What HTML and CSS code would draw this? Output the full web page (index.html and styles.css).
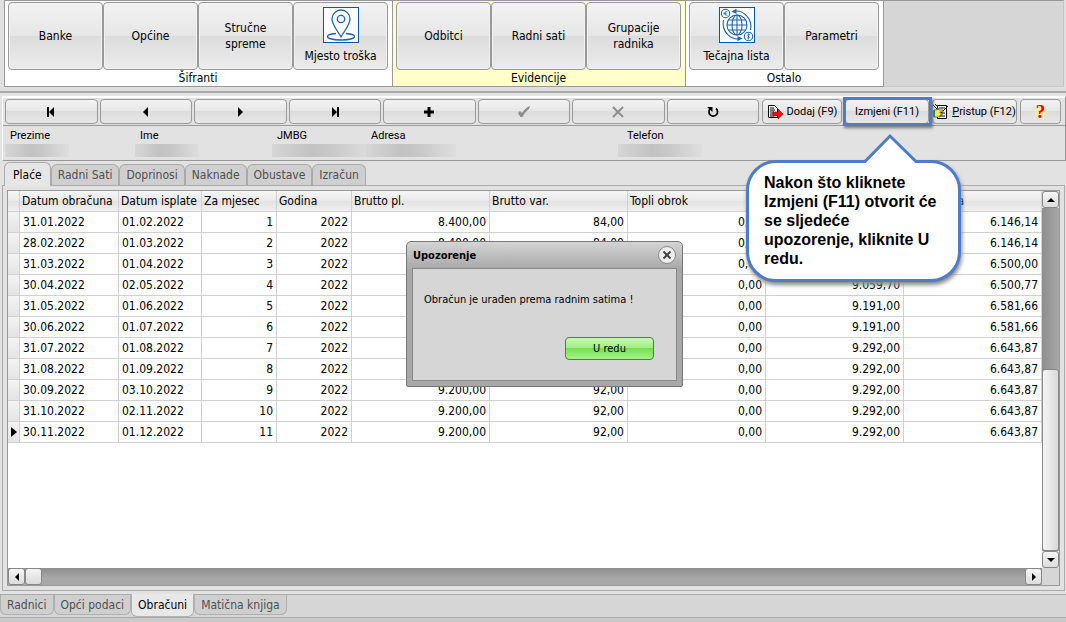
FILE: index.html
```html
<!DOCTYPE html>
<html lang="hr">
<head>
  <meta charset="UTF-8">
  <meta name="viewport" content="width=device-width, initial-scale=1.0">
  <title>Obračun plaća</title>
  <link rel="stylesheet" href="styles.css">
</head>
<body>
  <div class="ribbon">
    <section class="group">
      <div class="group-buttons">
        <button class="big">Banke</button>
        <button class="big">Općine</button>
        <button class="big">Stručne<br>spreme</button>
        <button class="big with-icon">
          <svg class="big-icon" viewBox="0 0 36 36">
            <rect x=".5" y=".5" width="35" height="35" fill="#fff" stroke="#0a57a8"/>
            <g fill="none" stroke="#1b62ae" stroke-width="1.3">
              <path d="M18 30C15 24 9 18 9 12a9 9 0 0 1 18 0c0 6-6 12-9 18z"/>
              <circle cx="18" cy="12" r="3.7"/>
              <path d="M13 26.500C7 27 4.500 28.500 4.500 29.500c0 2 6 3.500 13.500 3.500s13.500-1.500 13.500-3.500c0-1-2.500-2.500-8.500-3"/>
            </g>
          </svg>
          <span>Mjesto troška</span>
        </button>
      </div>
      <div class="group-title">Šifranti</div>
    </section>
    <section class="group yellow">
      <div class="group-buttons">
        <button class="big">Odbitci</button>
        <button class="big">Radni sati</button>
        <button class="big">Grupacije<br>radnika</button>
      </div>
      <div class="group-title">Evidencije</div>
    </section>
    <section class="group">
      <div class="group-buttons">
        <button class="big with-icon">
          <svg class="big-icon" viewBox="0 0 36 36">
            <rect x=".5" y=".5" width="35" height="35" fill="#fff" stroke="#0a57a8"/>
            <g fill="none" stroke="#1b62ae" stroke-width="1.1">
              <circle cx="18" cy="18" r="10"/>
              <ellipse cx="18" cy="18" rx="5" ry="10"/>
              <path d="M18 8v20M8 18h20M9.500 13h17M9.500 23h17"/>
              <circle cx="6.500" cy="6.500" r="4.200"/>
              <path d="M8.500 4.800c-3-1.500-4.500 3.500 0 3.500M4.500 6h3M4.500 7h3" stroke-width=".8"/>
              <circle cx="29.500" cy="29.500" r="4.200"/>
              <path d="M31 28c-1.500-1.300-3.500 0-2 1.300 2.500 1 1.500 3-1 1.500M29.500 26.500v6" stroke-width=".8"/>
              <path d="M14 4.500C24 2 34 12 31.500 23M22 31.500C12 34 2 24 4.500 13"/>
            </g>
            <path d="M12.500 4.800l5-3v5zM23.500 31.200l-5 3v-5z" fill="#1b62ae"/>
          </svg>
          <span>Tečajna lista</span>
        </button>
        <button class="big">Parametri</button>
      </div>
      <div class="group-title">Ostalo</div>
    </section>
    <div class="ribbon-rest"></div>
  </div>

  <main class="record">
    <div class="toolbar">
      <div class="navigator">
        <button class="btn" aria-label="Prvi"><svg viewBox="0 0 12 12"><path d="M2 1h2v10H2zM9 1v10L4 6z"/></svg></button>
        <button class="btn" aria-label="Prethodni"><svg viewBox="0 0 12 12"><path d="M8 1v10L3 6z"/></svg></button>
        <button class="btn" aria-label="Sljedeći"><svg viewBox="0 0 12 12"><path d="M4 1v10l5-5z"/></svg></button>
        <button class="btn" aria-label="Zadnji"><svg viewBox="0 0 12 12"><path d="M8 1h2v10H8zM3 1v10l5-5z"/></svg></button>
        <button class="btn" aria-label="Novi"><svg viewBox="0 0 12 12"><path d="M4.500 1h3v3.500H11v3H7.500V11h-3V7.500H1v-3h3.500z"/></svg></button>
        <button class="btn" aria-label="Spremi" disabled><svg viewBox="0 0 12 12"><path d="M0 7l2-2 2 2C6 4 9 1 12 0L11 3C8 5 6 8 4.500 11h-2z"/></svg></button>
        <button class="btn" aria-label="Odustani" disabled><svg viewBox="0 0 12 12"><path d="M1 1l10 10M11 1L1 11" fill="none" stroke="#8c8c8c" stroke-width="1.8"/></svg></button>
        <button class="btn" aria-label="Osvježi"><svg viewBox="0 0 12 12"><path d="M3.500 2.500a4.300 4.300 0 1 0 5.500 0" fill="none" stroke="#000" stroke-width="1.700"/><path d="M0 1h5.500v5z"/></svg></button>
      </div>
      <div class="actions">
        <button class="btn add">
          <svg class="act-icon" viewBox="0 0 16 16"><path d="M1.500 1.500h6l3 3v9h-9z" fill="#fff" stroke="#000"/><path d="M3 4h4M3 6h5M3 8h4M3 10h4M3 12h4" stroke="#000"/><path d="M6 8h5V5l5 5-5 5v-3H6z" fill="#e11" stroke="#900" stroke-width=".6"/></svg>
          Dodaj (F9)
        </button>
        <div class="edit">
          <button class="btn">Izmjeni (F11)</button>
          <div class="callout">
            <svg class="callout-tail" viewBox="0 0 60 30"><path d="M2 28.500h3L30 3l26 25.500h3V30H2z" fill="#fff"/><path d="M2 28.500h3L30 3l26 25.500h3" fill="none" stroke="#4d7cc9" stroke-width="3"/></svg>
            Nakon što kliknete Izmjeni (F11) otvorit će se sljedeće upozorenje, kliknite U redu.
          </div>
        </div>
        <button class="btn access">
          <svg class="act-icon" viewBox="0 0 16 16"><path d="M4.500 1.500h9v13h-9z" fill="#fff" stroke="#000"/><path d="M6 4h6M6 12h6M8 9h4M0 1l4 4M2 0l3 3M15 2L8 9" stroke="#000"/><path d="M1 6h3l1-2 1 2h4v2H7v1h2v2H7v2H1z" fill="#ffef3a" stroke="#333" stroke-width=".7"/><path d="M0 6h2v7H0z" fill="#0a8b8b"/></svg>
          <span><u>P</u>ristup (F12)</span>
        </button>
        <button class="btn help" aria-label="Pomoć"><span>?</span></button>
      </div>
    </div>

    <dl class="person">
      <div><dt>Prezime</dt><dd class="smudge"></dd></div>
      <div><dt>Ime</dt><dd class="smudge"></dd></div>
      <div><dt>JMBG</dt><dd class="smudge wide"></dd></div>
      <div><dt>Adresa</dt><dd class="smudge mid"></dd></div>
      <div><dt>Telefon</dt><dd class="smudge phone"></dd></div>
    </dl>
  </main>

  <nav class="tabs">
    <button class="tab active">Plaće</button>
    <button class="tab">Radni Sati</button>
    <button class="tab">Doprinosi</button>
    <button class="tab">Naknade</button>
    <button class="tab">Obustave</button>
    <button class="tab">Izračun</button>
  </nav>

  <div class="sheet">
    <div class="grid">
      <div class="grid-view">
        <table>
          <colgroup>
            <col class="c-mark"><col class="c-calc"><col class="c-paid"><col class="c-num"><col class="c-num">
            <col class="c-sum"><col class="c-sum"><col class="c-sum"><col class="c-sum"><col>
          </colgroup>
          <thead>
            <tr><th></th><th>Datum obračuna</th><th>Datum isplate</th><th>Za mjesec</th><th>Godina</th><th>Brutto pl.</th><th>Brutto var.</th><th>Topli obrok</th><th></th><th>Neto plaća</th></tr>
          </thead>
          <tbody>
            <tr><td></td><td>31.01.2022</td><td>01.02.2022</td><td>1</td><td>2022</td><td>8.400,00</td><td>84,00</td><td>0,00</td><td></td><td>6.146,14</td></tr>
            <tr><td></td><td>28.02.2022</td><td>01.03.2022</td><td>2</td><td>2022</td><td>8.400,00</td><td>84,00</td><td>0,00</td><td></td><td>6.146,14</td></tr>
            <tr><td></td><td>31.03.2022</td><td>01.04.2022</td><td>3</td><td>2022</td><td></td><td></td><td>0,00</td><td></td><td>6.500,00</td></tr>
            <tr><td></td><td>30.04.2022</td><td>02.05.2022</td><td>4</td><td>2022</td><td></td><td></td><td>0,00</td><td>9.059,70</td><td>6.500,77</td></tr>
            <tr><td></td><td>31.05.2022</td><td>01.06.2022</td><td>5</td><td>2022</td><td></td><td></td><td>0,00</td><td>9.191,00</td><td>6.581,66</td></tr>
            <tr><td></td><td>30.06.2022</td><td>01.07.2022</td><td>6</td><td>2022</td><td></td><td></td><td>0,00</td><td>9.191,00</td><td>6.581,66</td></tr>
            <tr><td></td><td>31.07.2022</td><td>01.08.2022</td><td>7</td><td>2022</td><td></td><td></td><td>0,00</td><td>9.292,00</td><td>6.643,87</td></tr>
            <tr><td></td><td>31.08.2022</td><td>01.09.2022</td><td>8</td><td>2022</td><td></td><td></td><td>0,00</td><td>9.292,00</td><td>6.643,87</td></tr>
            <tr><td></td><td>30.09.2022</td><td>03.10.2022</td><td>9</td><td>2022</td><td>9.200,00</td><td>92,00</td><td>0,00</td><td>9.292,00</td><td>6.643,87</td></tr>
            <tr><td></td><td>31.10.2022</td><td>02.11.2022</td><td>10</td><td>2022</td><td>9.200,00</td><td>92,00</td><td>0,00</td><td>9.292,00</td><td>6.643,87</td></tr>
            <tr class="current"><td><svg viewBox="0 0 6 10"><path d="M0 0l6 5-6 5z"/></svg></td><td>30.11.2022</td><td>01.12.2022</td><td>11</td><td>2022</td><td>9.200,00</td><td>92,00</td><td>0,00</td><td>9.292,00</td><td>6.643,87</td></tr>
          </tbody>
        </table>
      </div>
      <div class="vscroll">
        <button class="arrow" aria-label="Gore"><svg viewBox="0 0 8 8"><path d="M0 6h8L4 2z"/></svg></button>
        <div class="vtrack"><div class="vthumb"></div></div>
        <button class="arrow" aria-label="Dolje"><svg viewBox="0 0 8 8"><path d="M0 2h8L4 6z"/></svg></button>
      </div>
      <div class="hscroll">
        <button class="arrow" aria-label="Lijevo"><svg viewBox="0 0 8 8"><path d="M6 0v8L2 4z"/></svg></button>
        <div class="hthumb"></div>
        <button class="arrow" aria-label="Desno"><svg viewBox="0 0 8 8"><path d="M2 0v8l4-4z"/></svg></button>
      </div>
      <div class="corner"></div>
    </div>
  </div>

  <nav class="bottom-tabs">
    <button class="tab">Radnici</button>
    <button class="tab">Opći podaci</button>
    <button class="tab active">Obračuni</button>
    <button class="tab">Matična knjiga</button>
  </nav>
  <footer class="status"></footer>

  <div class="dialog" role="dialog" aria-labelledby="dialog-title">
    <header class="dialog-head">
      <h2 id="dialog-title">Upozorenje</h2>
      <button class="close" aria-label="Zatvori"><svg viewBox="0 0 10 10"><path d="M1.500 1.500l7 7M8.500 1.500l-7 7" stroke="#444" stroke-width="2"/></svg></button>
    </header>
    <div class="dialog-body">
      <p>Obračun je urađen prema radnim satima !</p>
      <button class="ok">U redu</button>
    </div>
  </div>
</body>
</html>
```

FILE: styles.css
```css
* {
    box-sizing: border-box;
}
body {
    margin: 0;
    min-height: 100vh;
    position: relative;
    display: flex;
    flex-direction: column;
    background-color: #e2e2e2;
    color: #000;
    font-family: "DejaVu Sans Condensed", "DejaVu Sans", sans-serif;
    font-size: 12px;
}
button {
    font: inherit;
    color: inherit;
    padding: 0;
    margin: 0;
}
svg {
    display: block;
}

/* ribbon */
.ribbon {
    display: flex;
    height: 93px;
    padding: 0 2px 4px 4px;
    border-bottom: 2px solid #a8a8a8;
    background-color: #e0e0e0;
}
.group {
    height: 87px;
    padding: 1px 4px 0 3px;
    background-color: #fff;
    border: 1px solid #999;
    border-left: 0;
}
.group:first-child {
    border-left: 1px solid #999;
}
.yellow {
    background-color: #ffffcc;
}
.group-buttons {
    display: flex;
}
.big {
    width: 95px;
    height: 68px;
    line-height: 16px;
    border: 1px solid #999;
    border-radius: 4px;
    background: linear-gradient(#f3f3f3, #e6e6e6 50%, #dcdcdc 50%, #ececec);
    box-shadow: inset 0 0 0 1px #f2f2f2;
}
.with-icon {
    display: flex;
    flex-direction: column;
    align-items: center;
    justify-content: flex-end;
    gap: 5px;
    padding-bottom: 5px;
}
.big-icon {
    width: 36px;
    height: 36px;
}
.group-title {
    text-align: center;
    line-height: 16px;
}
.ribbon-rest {
    flex: 1;
    height: 87px;
    background-color: #d6d6d6;
    border-top: 1px solid #999;
    border-right: 1px solid #c4c4c4;
    border-bottom: 1px solid #c8c8c8;
}

/* record panel */
.record {
    margin: 3px 0 0 2px;
    border-top: 2px solid #fff;
    border-left: 1px solid #fff;
    border-right: 1px solid #999;
    border-bottom: 1px solid #999;
    font-family: Roboto, "Liberation Sans", sans-serif;
    font-size: 11px;
}
.toolbar {
    display: flex;
    gap: 3px;
    padding: 1px 4px 1px 2px;
    border-bottom: 1px solid #999;
}
.navigator {
    flex: 1;
    display: grid;
    grid-template-columns: repeat(8, 1fr);
    gap: 2px;
}
.btn {
    height: 25px;
    display: flex;
    align-items: center;
    justify-content: center;
    border: 1px solid #9a9a9a;
    border-radius: 4px;
    background: linear-gradient(#f3f3f3, #e6e6e6 50%, #dcdcdc 50%, #e8e8e8);
    white-space: nowrap;
}
.navigator svg {
    width: 12px;
    height: 12px;
}
.btn:disabled {
    fill: #8c8c8c;
}
.actions {
    display: flex;
    gap: 3px;
}
.act-icon {
    width: 16px;
    height: 16px;
}
.add {
    width: 80px;
    gap: 4px;
}
.access {
    width: 85px;
    gap: 3px;
}
.help {
    width: 41px;
}
.help span {
    font-family: "Liberation Serif", serif;
    font-size: 19px;
    font-weight: bold;
    line-height: 16px;
    padding: 0 4px;
    color: #e00;
    background: radial-gradient(#fff27a, transparent 70%);
}
.edit {
    position: relative;
}
.edit .btn {
    width: 84px;
}
.edit::after {
    content: "";
    position: absolute;
    inset: -2px -3px -2px -2px;
    border: 3px solid #4d7cc9;
    box-shadow: 1px 2px 3px #777;
}

/* help bubble */
.callout {
    position: absolute;
    z-index: 3;
    top: 61px;
    right: -32px;
    width: 215px;
    padding: 10px 16px 11px 15px;
    border: 3px solid #4d7cc9;
    border-radius: 30px;
    background-color: #fff;
    box-shadow: 1px 3px 4px #888;
    font-family: "Liberation Sans", Arial, sans-serif;
    font-size: 16px;
    font-weight: bold;
    line-height: 19px;
}
.callout-tail {
    position: absolute;
    left: 111px;
    top: -30px;
    width: 60px;
    height: 30px;
}

.person {
    display: grid;
    grid-template-columns: 130px 137px 94px 256px 1fr;
    height: 34px;
    margin: 0;
    padding: 3px 0 0 7px;
}
.person dt {
    line-height: 13px;
}
.smudge {
    width: 64px;
    height: 13px;
    margin: 2px 0 0 -5px;
    background: linear-gradient(90deg, #d6d6d6, #c2c2c2 40%, #c8c8c8 60%, #dedede);
}
.wide {
    width: 99px;
}
.mid {
    width: 90px;
}
.phone {
    width: 84px;
    margin-left: -9px;
}

/* tabs */
.tabs {
    display: flex;
    align-items: flex-end;
    height: 23px;
    margin-top: 1px;
    padding-left: 4px;
}
.tab {
    height: 21px;
    padding: 0 6px;
    border: 1px solid #aaa;
    border-bottom: 0;
    border-radius: 6px 6px 0 0;
    background-color: #cfcfcf;
    color: #505050;
}
.tabs .active {
    height: 24px;
    margin-bottom: -1px;
    padding: 0 8px;
    background-color: #e6e6e6;
    color: #000;
    z-index: 1;
}
.sheet {
    flex: 1;
    display: flex;
    margin: 0 1px 3px 2px;
    padding: 4px;
    border: 1px solid #aaa;
}
.grid {
    flex: 1;
    display: grid;
    grid-template-columns: 1fr 17px;
    grid-template-rows: 1fr 17px;
    border: 1px solid #999;
}
.grid-view {
    background-color: #fff;
    overflow: hidden;
}
table {
    width: 100%;
    table-layout: fixed;
    border-collapse: separate;
    border-spacing: 0;
}
th,
td {
    height: 21px;
    padding: 0 3px;
    border-right: 1px solid #d0d0d0;
    border-bottom: 1px solid #d0d0d0;
    text-align: right;
    white-space: nowrap;
}
th {
    padding: 0 2px;
    text-align: left;
    font-weight: normal;
    background: linear-gradient(#f6f6f6, #e9e9e9 50%, #e2e2e2 50%, #f0f0f0);
}
td:first-child {
    background: linear-gradient(#f4f4f4, #e4e4e4);
}
td:nth-child(2),
td:nth-child(3) {
    text-align: left;
}
.current svg {
    width: 6px;
    height: 10px;
}
.c-mark {
    width: 12px;
}
.c-calc {
    width: 99px;
}
.c-paid {
    width: 83px;
}
.c-num {
    width: 75px;
}
.c-sum {
    width: 138px;
}

/* scroll bars */
.vscroll {
    display: flex;
    flex-direction: column;
}
.vtrack {
    flex: 1;
    display: flex;
    flex-direction: column;
    justify-content: flex-end;
    background: linear-gradient(90deg, #8e8e8e, #a8a8a8);
}
.vthumb {
    height: 53%;
    border: 1px solid #888;
    border-radius: 3px;
    background: linear-gradient(90deg, #f4f4f4, #dadada);
}
.hscroll {
    display: flex;
    background: linear-gradient(#8e8e8e, #a8a8a8 60%);
}
.hscroll .arrow:last-child {
    margin-left: auto;
}
.hthumb {
    width: 17px;
    border: 1px solid #888;
    border-radius: 3px;
    background: linear-gradient(#f4f4f4, #dadada);
}
.arrow {
    width: 17px;
    height: 17px;
    display: flex;
    align-items: center;
    justify-content: center;
    border: 1px solid #888;
    border-radius: 3px;
    background: linear-gradient(#f6f6f6, #dcdcdc);
}
.arrow svg {
    width: 8px;
    height: 8px;
}
.corner {
    background-color: #d6d6d6;
}

.bottom-tabs {
    display: flex;
    height: 23px;
    border-top: 1px solid #aaa;
    background-color: #d6d6d6;
}
.bottom-tabs .tab {
    height: 20px;
    border: 1px solid #b0b0b0;
    border-top: 0;
    border-radius: 0 0 6px 6px;
}
.bottom-tabs .active {
    height: 23px;
    margin-top: -1px;
    background-color: #e8e8e8;
    color: #000;
}
.status {
    height: 5px;
    border-top: 1px solid #aaa;
    background-color: #cacaca;
}

/* message box */
.dialog {
    position: absolute;
    z-index: 2;
    left: 406px;
    top: 241px;
    width: 277px;
    padding: 0 5px 5px;
    border: 1px solid #777;
    border-radius: 5px 5px 2px 2px;
    background: linear-gradient(#d4d4d4, #a8a8a8 27px);
    font-size: 11px;
}
.dialog-head {
    display: flex;
    align-items: center;
    justify-content: space-between;
    height: 26px;
    padding: 0 1px;
}
.dialog-head h2 {
    margin: 0;
    font-size: 11px;
}
.close {
    width: 18px;
    height: 18px;
    display: flex;
    align-items: center;
    justify-content: center;
    border: 1px solid #888;
    border-radius: 50%;
    background-color: #eee;
}
.close svg {
    width: 10px;
    height: 10px;
}
.dialog-body {
    display: flex;
    flex-direction: column;
    height: 113px;
    padding: 23px 22px 20px 11px;
    border: 1px solid #888;
    background-color: #d6d6d6;
}
.dialog-body p {
    margin: 0;
    line-height: 15px;
}
.ok {
    width: 89px;
    height: 23px;
    margin: auto 0 0 auto;
    border: 1px solid #4f7d45;
    border-radius: 4px;
    background: linear-gradient(#c8f8b4, #9cee80 50%, #74e052 50%, #a4f488);
}
```
